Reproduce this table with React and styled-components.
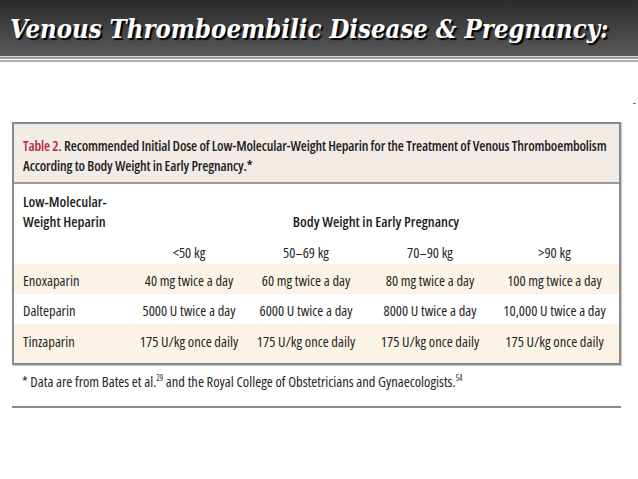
import styled, { createGlobalStyle } from "styled-components";

const GlobalStyle = createGlobalStyle`
html, body {
  margin: 0;
  padding: 0;
  background: #fff;
}
body {
  width: 638px;
  height: 479px;
  overflow: hidden;
}
`

const rows = [
    ["Enoxaparin", "40 mg twice a day", "60 mg twice a day", "80 mg twice a day", "100 mg twice a day"],
    ["Dalteparin", "5000 U twice a day", "6000 U twice a day", "8000 U twice a day", "10,000 U twice a day"],
    ["Tinzaparin", "175 U/kg once daily", "175 U/kg once daily", "175 U/kg once daily", "175 U/kg once daily"],
];

const weights = ["<50 kg", "50–69 kg", "70–90 kg", ">90 kg"];

function App(){

    const dataRows = rows.map((row, i)=>{
        return (
            <Row key = {i} shaded = {i % 2 === 0} tall = {i === rows.length - 1}>
                {row.map((cell, j)=> <Cell key = {j} first = {j === 0}>{cell}</Cell>)}
            </Row>
        )
    });

    return (
        <Page>
            <GlobalStyle/>
            <Header>
                <Title>Venous Thromboembilic Disease &amp; Pregnancy:</Title>
            </Header>
            <Rule/>
            <Content>
                <Mark>-</Mark>
                <TableBox>
                    <Caption>
                        <Red>Table 2.</Red> Recommended Initial Dose of Low-Molecular-Weight Heparin for the Treatment of Venous Thromboembolism<br/>
                        According to Body Weight in Early Pregnancy.*
                    </Caption>
                    <HeadTop>
                        <HeadLabel>Low-Molecular-<br/>Weight Heparin</HeadLabel>
                        <Group>Body Weight in Early Pregnancy</Group>
                    </HeadTop>
                    <WeightRow>
                        <Cell first/>
                        {weights.map((w, i)=> <Cell key = {i}>{w}</Cell>)}
                    </WeightRow>
                    {dataRows}
                </TableBox>
                <Footnote>
                    * Data are from Bates et al.<Sup>29</Sup> and the Royal College of Obstetricians and Gynaecologists.<Sup>54</Sup>
                </Footnote>
                <BottomLine/>
            </Content>
        </Page>
    )
}

const Page = styled.div`
width: 638px;
height: 479px;
background: #fff;
`

const Header = styled.div`
height: 56px;
background: linear-gradient(to bottom, #2b2b2b 0%, #3f3f3f 45%, #5a5a5a 100%);
display: flex;
align-items: center;
padding-left: 10px;
box-sizing: border-box;
`

const Title = styled.h1`
margin: 0;
margin-top: 1px;
font-family: "DejaVu Serif", "Liberation Serif", serif;
font-style: italic;
font-weight: bold;
font-stretch: condensed;
font-size: 25.5px;
color: #fff;
text-shadow: 2px 2px 1px #000;
white-space: nowrap;
`

const Rule = styled.div`
height: 6px;
border-top: 1px solid #d6d6d6;
background: linear-gradient(to bottom, #9a9a9a 0px, #9a9a9a 2px, #fff 2px, #fff 3px, #b0b0b0 3px, #b0b0b0 5px, #fff 5px);
`

const Content = styled.div`
padding: 0 17px 0 12px;
display: flex;
flex-direction: column;
`

const Mark = styled.div`
align-self: flex-end;
margin-right: -15px;
height: 59px;
font-family: "Open Sans", sans-serif;
font-size: 10px;
color: #333;
padding-top: 32px;
box-sizing: border-box;
`

const TableBox = styled.div`
border: 2px solid #8a8a8a;
box-shadow: 1px 1px 1px #ccc;
font-family: "Open Sans", sans-serif;
font-stretch: condensed;
color: #222;
`

const Caption = styled.div`
background: #f2ebe6;
border-bottom: 2px solid #9a9a9a;
padding: 12px 4px 6px 9px;
height: 60px;
box-sizing: border-box;
font-size: 14px;
letter-spacing: -0.15px;
line-height: 20px;
font-weight: 600;
color: #1e1e1e;
white-space: nowrap;
`

const Red = styled.span`
color: #b4283a;
`

const HeadTop = styled.div`
display: flex;
align-items: flex-end;
padding-top: 8px;
font-weight: 600;
font-size: 14.5px;
line-height: 20px;
color: #1e1e1e;
`

const HeadLabel = styled.div`
width: 120px;
padding-left: 9px;
`

const Group = styled.div`
flex: 1;
text-align: center;
padding-right: 10px;
`

const Row = styled.div`
display: grid;
grid-template-columns: 120px 110px 124px 124px 125px;
align-items: center;
height: ${props => props.tall ? "39px" : "30px"};
padding-top: 3px;
padding-bottom: ${props => props.tall ? "8px" : "0"};
box-sizing: border-box;
background: ${props => props.shaded ? "#fcf3e7" : "#fff"};
`

const WeightRow = styled(Row)`
height: 32px;
padding-top: 8px;
`

const Cell = styled.div`
font-size: 14.5px;
font-weight: 450;
text-align: ${props => props.first ? "left" : "center"};
padding-left: ${props => props.first ? "9px" : "0"};
white-space: nowrap;
color: #262626;
`

const Footnote = styled.div`
font-family: "Open Sans", sans-serif;
font-stretch: condensed;
font-size: 14.5px;
font-weight: 450;
color: #262626;
padding: 7px 0 0 10px;
height: 41px;
box-sizing: border-box;
`

const Sup = styled.sup`
font-size: 8px;
`

const BottomLine = styled.div`
height: 2px;
background: #8a8a8a;
`

export default App;
